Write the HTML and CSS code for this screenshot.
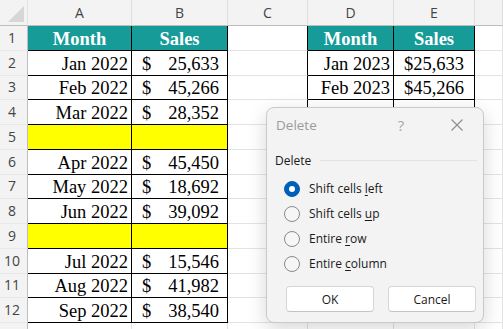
FILE: index.html
```html
<!DOCTYPE html>
<html lang="en">
<head>
    <meta charset="UTF-8">
    <meta name="viewport" content="width=device-width, initial-scale=1.0">
    <title>Delete Cells</title>
    <link rel="stylesheet" href="styles.css">
</head>
<body>

    <div class="sheet">
        <div class="corner"><span class="tri"></span></div>
        <div class="col">A</div>
        <div class="col">B</div>
        <div class="col">C</div>
        <div class="col">D</div>
        <div class="col">E</div>
        <div class="col last"></div>

        <div class="row">1</div>
        <div class="hd">Month</div>
        <div class="hd">Sales</div>
        <div class="cell lb"></div>
        <div class="hd">Month</div>
        <div class="hd">Sales</div>
        <div class="cell"></div>

        <div class="row">2</div>
        <div class="m">Jan 2022</div>
        <div class="amt"><span>$</span><span>25,633</span></div>
        <div class="cell lb"></div>
        <div class="m">Jan 2023</div>
        <div class="cur">$25,633</div>
        <div class="cell"></div>

        <div class="row">3</div>
        <div class="m">Feb 2022</div>
        <div class="amt"><span>$</span><span>45,266</span></div>
        <div class="cell lb"></div>
        <div class="m">Feb 2023</div>
        <div class="cur">$45,266</div>
        <div class="cell"></div>

        <div class="row">4</div>
        <div class="m">Mar 2022</div>
        <div class="amt"><span>$</span><span>28,352</span></div>
        <div class="cell lb"></div>
        <div class="m"></div>
        <div class="cur"></div>
        <div class="cell"></div>

        <div class="row">5</div>
        <div class="m blank"></div>
        <div class="m blank"></div>
        <div class="cell lb"></div>
        <div class="m"></div>
        <div class="cur"></div>
        <div class="cell"></div>

        <div class="row">6</div>
        <div class="m">Apr 2022</div>
        <div class="amt"><span>$</span><span>45,450</span></div>
        <div class="cell lb"></div>
        <div class="m"></div>
        <div class="cur"></div>
        <div class="cell"></div>

        <div class="row">7</div>
        <div class="m">May 2022</div>
        <div class="amt"><span>$</span><span>18,692</span></div>
        <div class="cell lb"></div>
        <div class="m"></div>
        <div class="cur"></div>
        <div class="cell"></div>

        <div class="row">8</div>
        <div class="m">Jun 2022</div>
        <div class="amt"><span>$</span><span>39,092</span></div>
        <div class="cell lb"></div>
        <div class="m"></div>
        <div class="cur"></div>
        <div class="cell"></div>

        <div class="row">9</div>
        <div class="m blank"></div>
        <div class="m blank"></div>
        <div class="cell lb"></div>
        <div class="m"></div>
        <div class="cur"></div>
        <div class="cell"></div>

        <div class="row">10</div>
        <div class="m">Jul 2022</div>
        <div class="amt"><span>$</span><span>15,546</span></div>
        <div class="cell lb"></div>
        <div class="m"></div>
        <div class="cur"></div>
        <div class="cell"></div>

        <div class="row">11</div>
        <div class="m">Aug 2022</div>
        <div class="amt"><span>$</span><span>41,982</span></div>
        <div class="cell lb"></div>
        <div class="m"></div>
        <div class="cur"></div>
        <div class="cell"></div>

        <div class="row">12</div>
        <div class="m">Sep 2022</div>
        <div class="amt"><span>$</span><span>38,540</span></div>
        <div class="cell lb"></div>
        <div class="m"></div>
        <div class="cur"></div>
        <div class="cell"></div>

        <div class="row"></div>
        <div class="cell"></div>
        <div class="cell"></div>
        <div class="cell"></div>
        <div class="cell"></div>
        <div class="cell"></div>
        <div class="cell"></div>
    </div>

    <div class="dlg">
        <div class="dlg-title">
            <span>Delete</span>
            <span class="help">?</span>
            <span class="close">
                <svg width="14" height="14" viewBox="0 0 14 14">
                    <path d="M1.5 1.5 L12.5 12.5 M12.5 1.5 L1.5 12.5" stroke="#8c8c8c" stroke-width="1.1" fill="none"/>
                </svg>
            </span>
        </div>
        <div class="group">
            <span>Delete</span>
            <span class="rule"></span>
        </div>
        <div class="opts">
            <div class="opt"><span class="radio on"></span><span>Shift cells <u>l</u>eft</span></div>
            <div class="opt"><span class="radio"></span><span>Shift cells <u>u</u>p</span></div>
            <div class="opt"><span class="radio"></span><span>Entire <u>r</u>ow</span></div>
            <div class="opt"><span class="radio"></span><span>Entire <u>c</u>olumn</span></div>
        </div>
        <div class="btns">
            <button type="button">OK</button>
            <button type="button">Cancel</button>
        </div>
    </div>

</body>
</html>
```

FILE: styles.css
```css
body {
    margin: 0;
    width: 503px;
    height: 329px;
    overflow: hidden;
    background: #fff;
    position: relative;
}
.sheet {
    display: grid;
    grid-template-columns: 28px 104px 96px 80px 86px 81px 1fr;
    grid-template-rows: 26px;
    grid-auto-rows: 24.75px;
    font-family: "Liberation Serif", serif;
    font-size: 18.5px;
    color: #000;
}
.sheet > div {
    box-sizing: border-box;
    border-right: 1px solid #e3e3e3;
    border-bottom: 1px solid #e3e3e3;
    display: flex;
    align-items: flex-end;
    line-height: 22px;
    white-space: nowrap;
    overflow: hidden;
}
.corner {
    background: #f3f3f3;
    position: relative;
    border-bottom-color: #bdbdbd !important;
}
.corner .tri {
    position: absolute;
    right: 3px;
    bottom: 3px;
    width: 0;
    height: 0;
    border-left: 16px solid transparent;
    border-bottom: 16px solid #d6d6d6;
}
.col {
    background: #f3f3f3;
    font-family: "Open Sans", sans-serif;
    font-size: 14px;
    color: #444;
    justify-content: center;
    align-items: center !important;
    border-right-color: #dedede !important;
    border-bottom-color: #bdbdbd !important;
}
.row {
    background: #f3f3f3;
    font-family: "Open Sans", sans-serif;
    font-size: 14px;
    color: #444;
    justify-content: center;
    align-items: center !important;
    padding-right: 3px;
    border-right-color: #bdbdbd !important;
    border-bottom-color: #e8e8e8 !important;
}
.cell.lb {
    border-right-color: #000;
}
.hd {
    background: #179b98;
    color: #fff;
    font-weight: bold;
    justify-content: center;
    border-right-color: #000 !important;
    border-bottom-color: #000 !important;
}
.m, .amt, .cur {
    border-right-color: #000 !important;
    border-bottom-color: #000 !important;
}
.m {
    justify-content: flex-end;
    padding-right: 3px;
}
.amt {
    justify-content: space-between;
    padding: 0 8px 0 10px;
}
.cur {
    justify-content: center;
}
.blank {
    background: #ffff00;
}

/* delete dialog */
.dlg {
    position: absolute;
    left: 266px;
    top: 107px;
    width: 218px;
    height: 216px;
    box-sizing: border-box;
    background: #f3f3f3;
    border: 1px solid #c9c9c9;
    border-radius: 8px;
    box-shadow: 0 6px 20px rgba(0, 0, 0, 0.16);
    font-family: "Open Sans", sans-serif;
    color: #1a1a1a;
}
.dlg-title {
    height: 33px;
    display: flex;
    align-items: center;
    padding: 0 14px 0 9px;
    font-size: 13.5px;
    color: #9b9b9b;
}
.help {
    margin-left: auto;
    width: 24px;
    text-align: center;
    font-size: 15px;
    color: #a8a8a8;
}
.close {
    margin-left: 32px;
    width: 24px;
    height: 24px;
    display: flex;
    align-items: center;
    justify-content: center;
}
.group {
    display: flex;
    align-items: center;
    height: 16px;
    margin: 11px 6px 0 8px;
    font-size: 12px;
}
.rule {
    flex: 1;
    height: 1px;
    background: #e2e2e2;
    margin-left: 9px;
}
.opts {
    margin-top: 8px;
    padding-left: 17px;
}
.opt {
    height: 25px;
    display: flex;
    align-items: center;
    font-size: 12px;
}
.opt u {
    text-underline-offset: 2px;
}
.radio {
    width: 16px;
    height: 16px;
    box-sizing: border-box;
    border: 1px solid #8a8a8a;
    border-radius: 50%;
    background: #f6f6f6;
    margin-right: 9px;
    position: relative;
}
.radio.on {
    background: #005fb8;
    border-color: #005fb8;
}
.radio.on::after {
    content: "";
    position: absolute;
    left: 4px;
    top: 4px;
    width: 6px;
    height: 6px;
    border-radius: 50%;
    background: #fff;
}
.btns {
    display: flex;
    gap: 14px;
    margin: 10px 7px 0 19px;
}
button {
    flex: 1;
    height: 26px;
    background: #fff;
    border: 1px solid #d6d6d6;
    border-bottom-color: #c4c4c4;
    border-radius: 4px;
    font-family: "Open Sans", sans-serif;
    font-size: 12px;
    color: #1a1a1a;
    padding: 0;
}
```
